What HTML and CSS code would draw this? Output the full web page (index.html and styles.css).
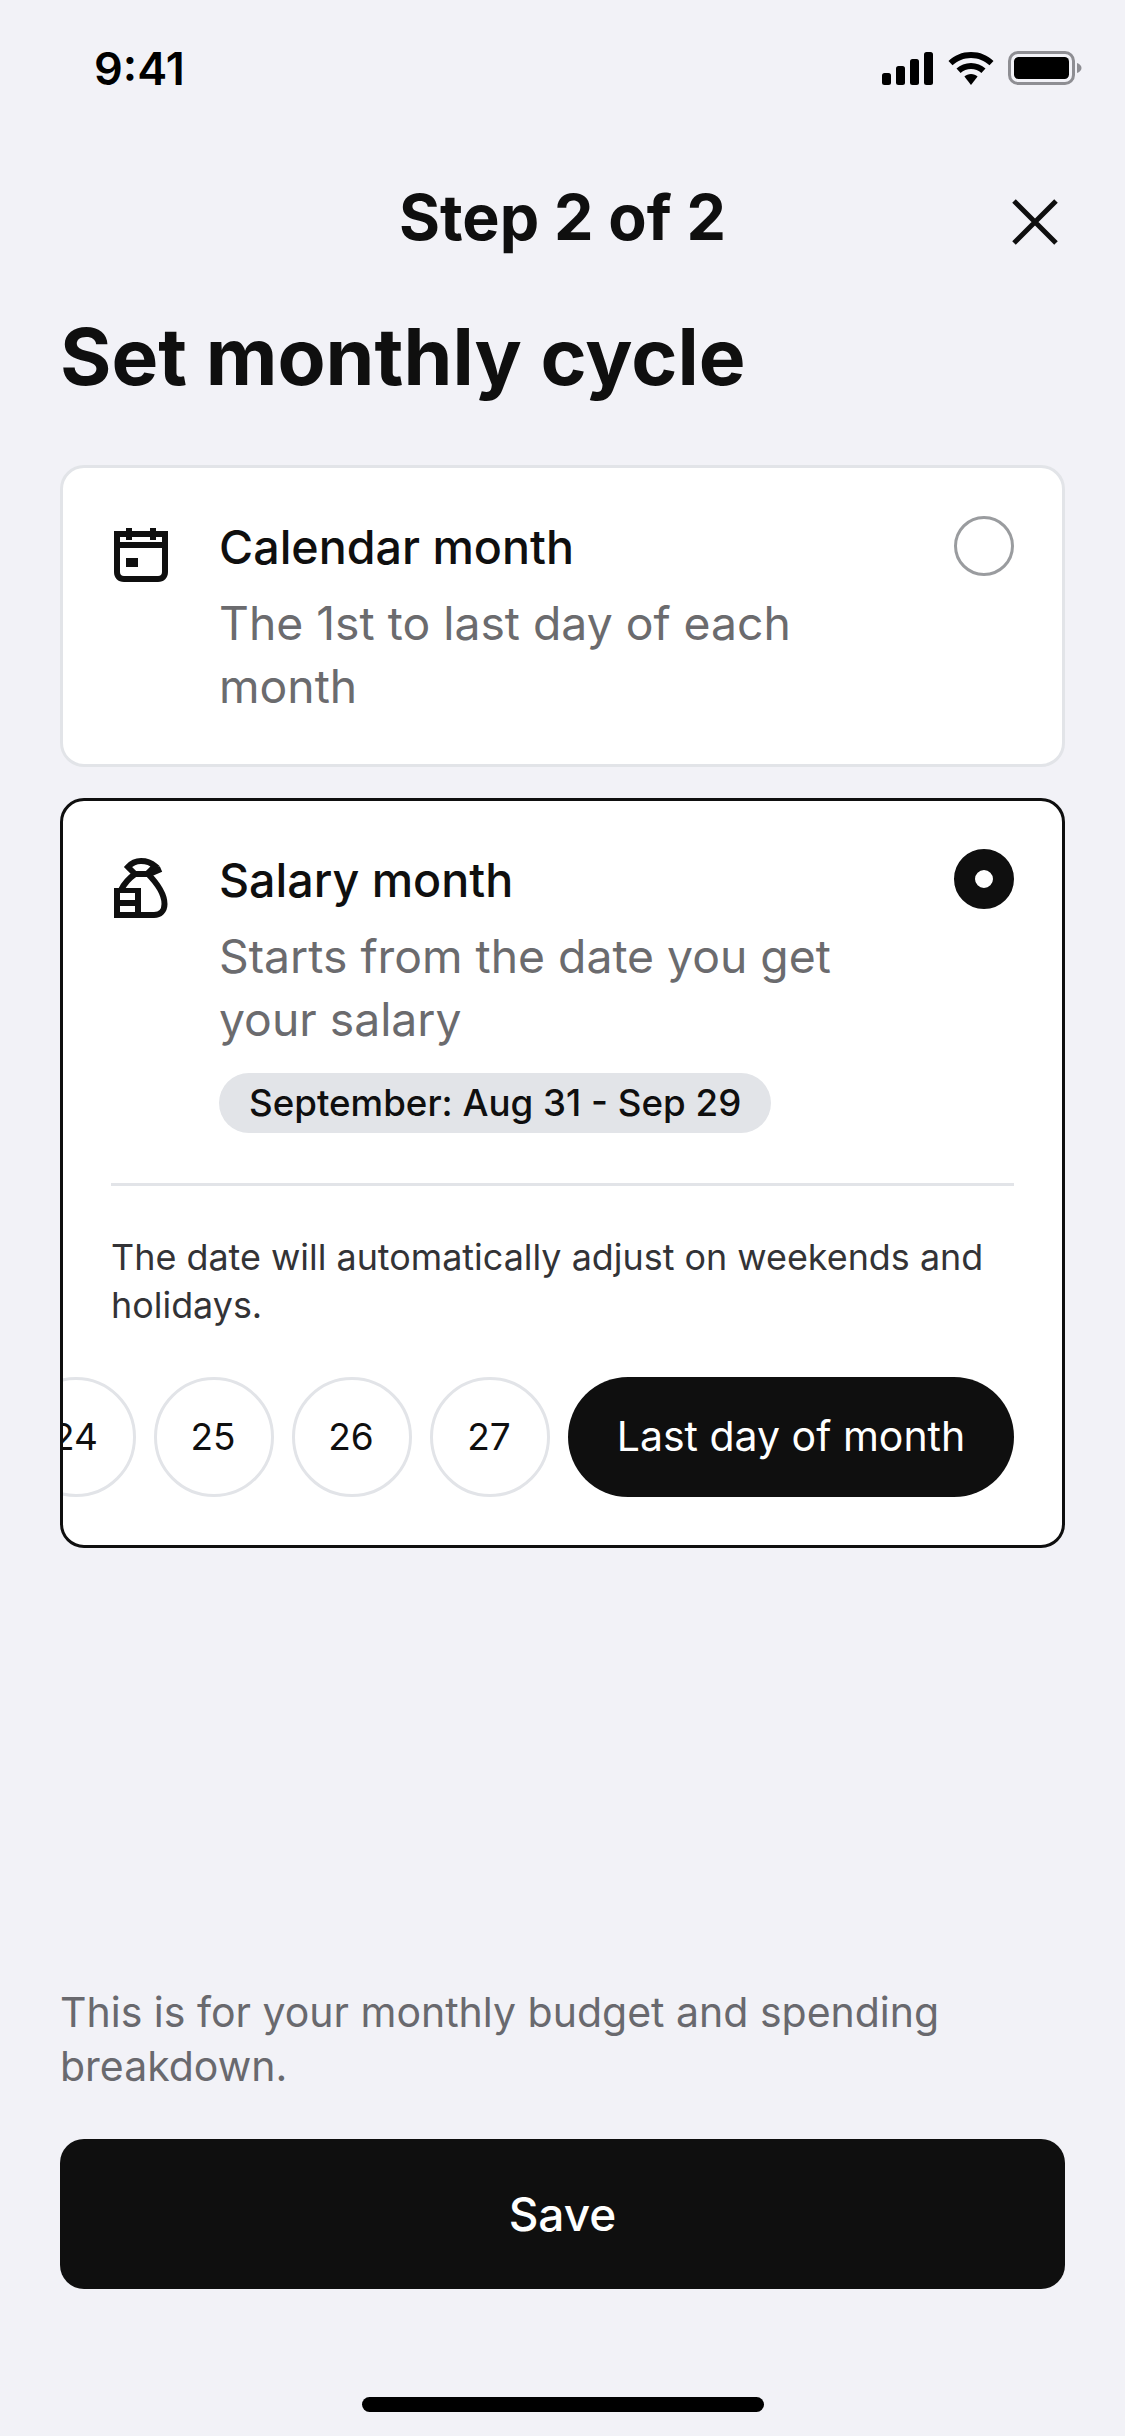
FILE: index.html
```html
<!DOCTYPE html>
<html>
<head>
    <title>Set monthly cycle</title>
    <link rel="stylesheet" href="styles.css">
</head>
<body>
    <div class="screen">
        <!-- Status bar -->
        <div class="status-bar">
            <span class="status-time">9:41</span>
            <div class="status-icons">
                <svg width="52" height="33" viewBox="0 0 52 33"><rect x="0" y="21" width="9" height="12" rx="2.5"/><rect x="14" y="14" width="9" height="19" rx="2.5"/><rect x="28" y="7" width="9" height="26" rx="2.5"/><rect x="42" y="0" width="9" height="33" rx="2.5"/></svg>
                <svg width="46" height="33" viewBox="0 0 46 33"><path d="M23 0C14 0 6.300 3.400 0.500 9L4.500 13.300C9.500 8.800 16 6 23 6C30 6 36.500 8.800 41.500 13.300L45.500 9C39.700 3.400 32 0 23 0Z"/><path d="M23 11C17.300 11 12.300 13.100 8.500 16.500L12.600 21C15.400 18.600 19 17.100 23 17.100C27 17.100 30.600 18.600 33.400 21L37.500 16.500C33.700 13.100 28.700 11 23 11Z"/><path d="M23 22C20.400 22 18.100 23 16.400 24.500L23 33L29.600 24.500C27.900 23 25.600 22 23 22Z"/></svg>
                <svg width="74" height="34" viewBox="0 0 74 34"><rect x="1.500" y="1.500" width="64" height="31" rx="8.500" fill="none" stroke="#8e8e93" stroke-width="3"/><rect x="6" y="6" width="55" height="22" rx="4.500"/><path d="M69 12C71.500 12.800 73.500 14.600 73.500 17C73.500 19.400 71.500 21.200 69 22Z" fill="#8e8e93"/></svg>
            </div>
        </div>

        <div class="header">
            <div class="step-title">Step 2 of 2</div>
            <svg class="close-icon" width="48" height="48" viewBox="0 0 48 48"><path d="M3 3L45 45M45 3L3 45" fill="none" stroke="#0f0f0f" stroke-width="5"/></svg>
        </div>

        <h1 class="page-title">Set monthly cycle</h1>

        <div class="card">
            <div class="option">
                <svg class="option-icon" width="54" height="54" viewBox="0 0 54 54"><path d="M0 3H54V44C54 50 50 54 44 54H10C4 54 0 50 0 44Z M6 9V14H48V9Z M6 20V44C6 46.500 7.500 48 10 48H44C46.500 48 48 46.500 48 44V20Z" fill="#0f0f0f" fill-rule="evenodd"/><rect x="12" y="0" width="6" height="12" fill="#0f0f0f"/><rect x="36" y="0" width="6" height="12" fill="#0f0f0f"/><rect x="12" y="30" width="12" height="9" fill="#0f0f0f"/></svg>
                <div class="option-text">
                    <div class="option-name">Calendar month</div>
                    <div class="option-desc">The 1st to last day of each month</div>
                </div>
                <span class="radio"></span>
            </div>
        </div>

        <div class="card selected">
            <div class="option">
                <svg class="option-icon bag" width="54" height="60" viewBox="0 0 54 60"><path d="M21 16L14 9C18 4.500 23 3 27 3C32 3 37 4.500 41 8L33 16ZM21 16C14 21 10 26 7 32M33 15C42 24 50.500 36 50.500 46C50.500 53 46 57 40 57H26M33 17L47 11" fill="none" stroke="#0f0f0f" stroke-width="6"/><path d="M0 30H27V60H0Z M6 35V42H21V35Z M6 48V54H21V48Z" fill="#0f0f0f" fill-rule="evenodd"/></svg>
                <div class="option-text">
                    <div class="option-name">Salary month</div>
                    <div class="option-desc">Starts from the date you get your salary</div>
                    <span class="range-pill">September: Aug 31 - Sep 29</span>
                </div>
                <span class="radio on"></span>
            </div>
            <div class="divider"></div>
            <p class="note">The date will automatically adjust on weekends and holidays.</p>
            <div class="day-row">
                <span class="day">24</span>
                <span class="day">25</span>
                <span class="day">26</span>
                <span class="day">27</span>
                <span class="day-last">Last day of month</span>
            </div>
        </div>

        <div class="footer">
            <p class="footer-note">This is for your monthly budget and spending breakdown.</p>
            <button class="save-btn">Save</button>
            <div class="home-bar"></div>
        </div>
    </div>
</body>
</html>
```

FILE: styles.css
```css
html, body {
    margin: 0;
    padding: 0;
}

body {
    background-color: #f2f2f7;
    color: #0f0f0f;
    font-family: Inter, "Noto Sans", sans-serif;
}

.screen {
    width: 1125px;
    height: 2436px;
    display: flex;
    flex-direction: column;
    padding: 0 60px;
    box-sizing: border-box;
    overflow: hidden;
}

/* Status bar */
.status-bar {
    height: 136px;
    display: flex;
    justify-content: space-between;
    align-items: center;
    padding: 0 0 0 34px;
    margin-right: -17px;
}

.status-time {
    font-size: 45px;
    font-weight: 600;
    color: #000;
}

.status-icons {
    display: flex;
    align-items: center;
    gap: 14px;
}

/* Header */
.header {
    height: 90px;
    margin-top: 36px;
    display: flex;
    align-items: center;
    justify-content: center;
    position: relative;
}

.step-title {
    font-size: 62.7px;
    font-weight: 700;
}

.close-icon {
    position: absolute;
    right: 6px;
    top: 26px;
}

.page-title {
    margin: 50px 0 0;
    font-size: 78.6px;
    line-height: 90px;
    font-weight: 700;
}

/* Cards */
.card {
    background-color: #fff;
    border: 3px solid #e2e4e8;
    border-radius: 24px;
    box-sizing: border-box;
    padding: 49px 48px 46px 48px;
    overflow: hidden;
}

.page-title + .card {
    margin-top: 63px;
}

.card + .card {
    margin-top: 31px;
}

.card.selected {
    border-color: #0f0f0f;
    padding-bottom: 48px;
}

.option {
    display: flex;
    align-items: flex-start;
}

.option-icon {
    flex: none;
    margin: 11px 0 0 3px;
}

.option-icon.bag {
    margin-top: 8px;
}

.option-text {
    flex: 1;
    margin-left: 51px;
    padding-right: 30px;
}

.option-name {
    font-size: 46.6px;
    line-height: 60px;
    font-weight: 500;
}

.option-desc {
    margin-top: 15px;
    font-size: 46.3px;
    line-height: 63px;
    color: #6b6b6e;
    max-width: 640px;
}

.radio {
    flex: none;
    width: 60px;
    height: 60px;
    margin-top: -1px;
    box-sizing: border-box;
    border: 3px solid #9a9c9f;
    border-radius: 50%;
}

.radio.on {
    border: 21px solid #0f0f0f;
    background-color: #fff;
}

.range-pill {
    display: inline-block;
    margin-top: 22px;
    padding: 0 30px;
    height: 60px;
    line-height: 60px;
    border-radius: 30px;
    background-color: #e2e4e8;
    font-size: 36.7px;
    font-weight: 500;
    white-space: nowrap;
}

.divider {
    height: 3px;
    background-color: #e2e4e8;
    margin: 50px 0 0;
}

.note {
    margin: 47px 0 0;
    font-size: 35.9px;
    line-height: 48px;
    color: #333336;
}

.day-row {
    display: flex;
    justify-content: flex-end;
    gap: 18px;
    margin: 48px 0 0;
}

.day {
    flex: none;
    width: 120px;
    height: 120px;
    box-sizing: border-box;
    border: 3px solid #e2e4e8;
    border-radius: 50%;
    padding: 0 2px 2px 0;
    display: flex;
    align-items: center;
    justify-content: center;
    font-size: 37px;
}

.day-last {
    flex: none;
    height: 120px;
    width: 446px;
    box-sizing: border-box;
    padding-bottom: 3px;
    border-radius: 60px;
    background-color: #0f0f0f;
    color: #fff;
    display: flex;
    align-items: center;
    justify-content: center;
    font-size: 41px;
}

/* Bottom */
.footer {
    margin-top: auto;
}

.footer-note {
    margin: 0;
    font-size: 41px;
    line-height: 54px;
    color: #69696e;
}

.save-btn {
    display: block;
    width: 100%;
    height: 150px;
    margin-top: 46px;
    border: none;
    border-radius: 24px;
    background-color: #0f0f0f;
    color: #fff;
    font-family: inherit;
    font-size: 46px;
    font-weight: 500;
}

.home-bar {
    width: 402px;
    height: 15px;
    border-radius: 8px;
    background-color: #000;
    margin: 108px auto 24px;
}
```
